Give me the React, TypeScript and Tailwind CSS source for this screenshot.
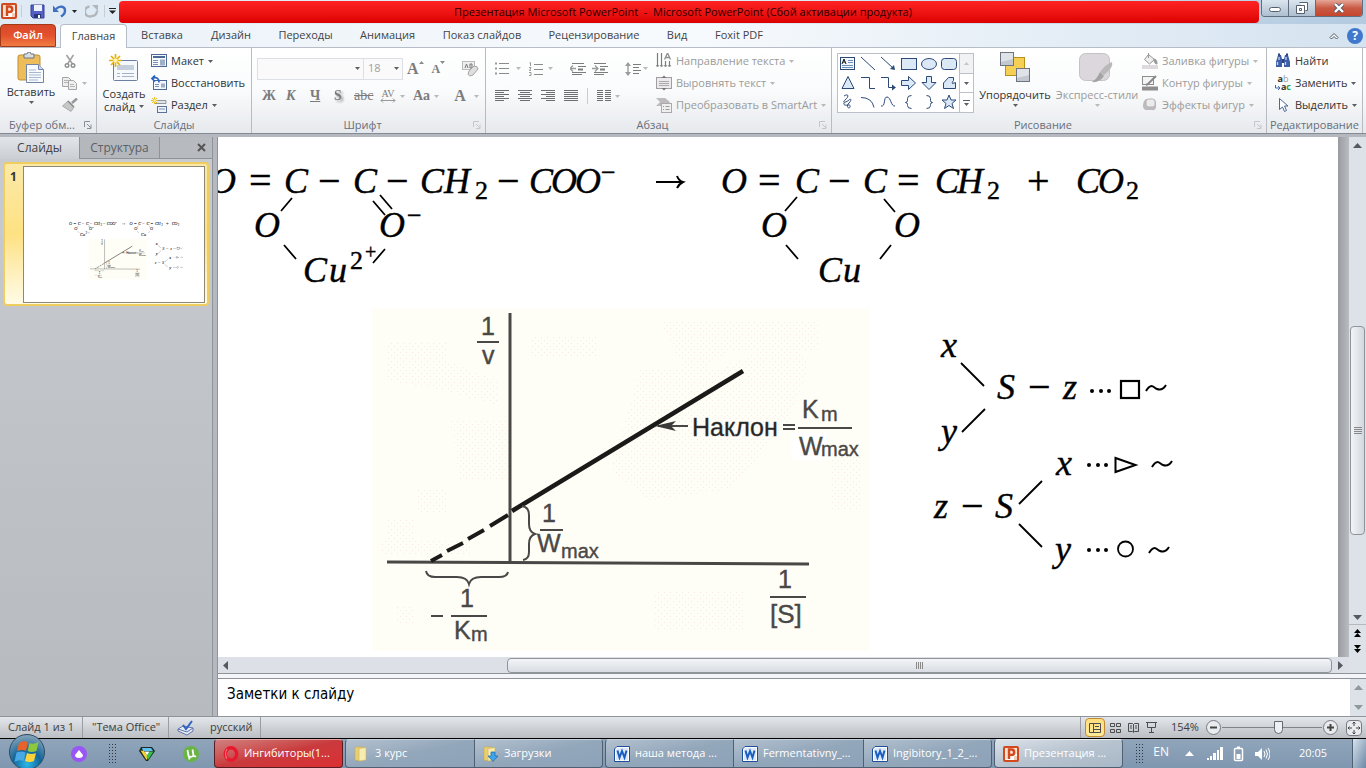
import React from 'react';

type IconProps = { w?: number; h?: number; className?: string; children: React.ReactNode };

const Icon = ({ w = 16, h = 16, className = '', children }: IconProps) => (
  <svg width={w} height={h} viewBox={`0 0 ${w} ${h}`} fill="none" className={`shrink-0 ${className}`} aria-hidden="true">
    {children}
  </svg>
);

const Caret = ({ color = '#5a5f66' }: { color?: string }) => (
  <Icon w={5} h={3}><path d="M0 0h5L2.5 3z" fill={color} /></Icon>
);

const Launcher = ({ muted = false }: { muted?: boolean }) => (
  <Icon w={8} h={8}>
    <path d="M.5 6V.5H6M3 3l4 4M7 3.500V7.500H3" stroke={muted ? '#c3c6ca' : '#8b9097'} />
  </Icon>
);

const VSep = ({ className = 'h-4' }: { className?: string }) => <span className={`w-px shrink-0 bg-[#c9ccd1] ${className}`} />;

/* ---------- icons ---------- */

const PptLogo = () => (
  <Icon>
    <rect x="1" y="1" width="14" height="14" rx="1" fill="#fff" stroke="#d2491d" strokeWidth="2" />
    <path d="M2 2h12v6L2 14z" fill="#fbe3d4" />
    <path d="M6 13V3.500h2.500a2.700 2.700 0 010 5.400H6" stroke="#d2491d" strokeWidth="2.400" />
    <path d="M11 11h3M11 13h3" stroke="#e69a74" />
  </Icon>
);

const WordLogo = () => (
  <Icon>
    <path d="M3 .5h12.500v15H.5V3z" fill="#fff" stroke="#1d4f9c" />
    <path d="M3.500 2h10.500v12H2V3.500z" fill="#dce9fb" />
    <path d="M3.500 4.500L5.500 11.500 8 5l2.500 6.500 2-7" stroke="#1a5fc0" strokeWidth="2" />
  </Icon>
);

const SaveIcon = () => (
  <Icon w={15} h={15}>
    <path d="M1 1h13v13H3l-2-2z" fill="#5562c4" stroke="#343f96" />
    <path d="M4 1h8v6H4z" fill="#eef3fb" />
    <path d="M4 10h7v4H4z" fill="#27357c" />
    <path d="M8 11h2v3H8z" fill="#fff" />
  </Icon>
);

const UndoIcon = () => (
  <Icon w={14} h={14}>
    <path d="M0 1.500v6.500h6z" fill="#3f6fc0" />
    <path d="M3 5C7 1 12 2.500 12 6.500c0 2.500-1.500 4.500-4 6" stroke="#3f6fc0" strokeWidth="2.400" />
  </Icon>
);

const RedoIcon = () => (
  <Icon w={14} h={14}>
    <path d="M4.500 2.500A5 5 0 107 12a5 5 0 005-5.500" stroke="#b3b7bc" strokeWidth="2.400" />
    <path d="M7 1h6v6z" fill="#b3b7bc" />
  </Icon>
);

const PasteIcon = () => (
  <Icon w={28} h={32}>
    <rect x="1" y="3" width="22" height="25" rx="2" fill="#edbd5c" stroke="#c18d35" />
    <path d="M7 2h3a2 2 0 014 0h3v4H7z" fill="#d9dde2" stroke="#6f7680" />
    <path d="M9.500 12.500h12l5 5v13h-17z" fill="#f7faff" stroke="#7285a5" />
    <path d="M21.500 12.500v5h5" fill="#ccd8e9" stroke="#7285a5" />
    <path d="M12 18h7M12 20.500h12M12 23h12M12 25.500h12M12 28h9" stroke="#a8b7ce" />
  </Icon>
);

const CutIcon = () => (
  <Icon w={12} h={15}>
    <path d="M2.500 1l6 9M9.500 1l-6 9" stroke="#a3a3a3" strokeWidth="1.600" />
    <circle cx="3" cy="11.500" r="1.800" stroke="#8f8f8f" strokeWidth="1.400" />
    <circle cx="9" cy="11.500" r="1.800" stroke="#8f8f8f" strokeWidth="1.400" />
  </Icon>
);

const CopyIcon = () => (
  <Icon w={16} h={14}>
    <path d="M.5 1.500h6l3 3v6h-9z" fill="#eee" stroke="#a5a5a5" />
    <path d="M6.500 4.500h5l3 3v6h-8z" fill="#f0f0f0" stroke="#a5a5a5" />
    <path d="M2 4.500h4M2 6.500h4M8 8.500h4M8 10.500h5" stroke="#b5b5b5" />
  </Icon>
);

const BrushIcon = () => (
  <Icon w={16} h={14}>
    <path d="M15 .5l-5 4.500" stroke="#999" strokeWidth="2.500" />
    <path d="M6 3l6 6-3 4.500L.5 8z" fill="#c6c6c6" stroke="#aaa" />
    <path d="M6 3l6 6" stroke="#888" strokeWidth="1.500" />
  </Icon>
);

const Spark = ({ s = 1 }: { s?: number }) => (
  <g transform={`scale(${s})`}>
    <path d="M6.500 0v13M0 6.500h13M2 2l9 9M11 2l-9 9" stroke="#e9b200" strokeWidth="1.700" />
    <circle cx="6.500" cy="6.500" r="2.200" fill="#fff6a8" />
  </g>
);

const NewSlideIcon = () => (
  <Icon w={30} h={29}>
    <rect x="4.500" y="6.500" width="24" height="20" rx="1" fill="#f5f8fc" stroke="#6a7fa2" />
    <rect x="8" y="11" width="17" height="5" fill="#c5cedb" />
    <path d="M8 19.500h3M13 19.500h12M8 22.500h3M13 22.500h12" stroke="#a5b3c8" />
    <Spark />
  </Icon>
);

const LayoutIcon = () => (
  <Icon w={16} h={14}>
    <rect x=".5" y=".5" width="15" height="12" fill="#f7fafd" stroke="#4d6a96" />
    <path d="M2 3h12" stroke="#4d6a96" strokeWidth="2" />
    <path d="M2 6.500h5M2 8.500h5M2 10.500h5" stroke="#7c93b5" />
    <path d="M9 5.500h5v6H9z" fill="#9fb0c8" />
  </Icon>
);

const ResetIcon = () => (
  <Icon w={16} h={16}>
    <rect x="2.500" y="5.500" width="13" height="9" fill="#f4f8fd" stroke="#4d6a96" />
    <path d="M4 9.500h4M4 11.500h4" stroke="#7c93b5" />
    <path d="M10 8.500h4v4h-4z" fill="#9fb0c8" />
    <path d="M1 3.500c4-2 7-.5 7 4M4 .5l-3 3 3 3" stroke="#2a62be" strokeWidth="1.700" />
  </Icon>
);

const SectionIcon = () => (
  <Icon w={16} h={16}>
    <path d="M7 3.500h8v3H4" fill="#e1e3e7" stroke="#92979f" />
    <rect x="6.500" y="9.500" width="9" height="6" fill="#eef3fa" stroke="#5c7297" />
    <path d="M8 12h6" stroke="#7c93b5" />
    <Spark s={0.55} />
  </Icon>
);

const EraserIcon = () => (
  <Icon w={17} h={16}>
    <rect x=".5" y=".5" width="12" height="8" fill="#eee" stroke="#bbb" />
    <path d="M3 7l1.500-4L6 7M8 3v4h2V3z" stroke="#777" />
    <path d="M7 10l5-5q4 0 4 3l-5 6q-4 2-5-1z" fill="#e0dede" stroke="#a5a3a3" />
  </Icon>
);

const Bullets = () => (
  <Icon w={14} h={13}>
    <path d="M4 1.500h10M4 6.500h10M4 11.500h10" stroke="#8b8b8b" />
    <path d="M0 1.500h2M0 6.500h2M0 11.500h2" stroke="#9a9a9a" strokeWidth="2" />
  </Icon>
);

const Numbering = () => (
  <Icon w={14} h={14}>
    <path d="M5 2.500h9M5 7.500h9M5 12.500h9" stroke="#8b8b8b" />
    <path d="M.5 1l1-.5V4M0 5.500h2L.5 8.500H2M0 10.500h2v3H0" stroke="#9a9a9a" />
  </Icon>
);

const Indent = ({ left = false }: { left?: boolean }) => (
  <Icon w={16} h={14}>
    <path d="M2 1.500h12M8 4.500h8M2 10.500h14M2 12.500h10" stroke="#7c7c7c" />
    <path d="M8 7.500h5" stroke="#7c7c7c" strokeWidth="2" />
    <path d={left ? 'M0 6.500h6M3 3.500l-3 3 3 3' : 'M0 6.500h6M3 3.500l3 3-3 3'} stroke="#9b9b9b" strokeWidth="1.300" />
  </Icon>
);

const LineSpacing = () => (
  <Icon w={16} h={16}>
    <path d="M3 2v12" stroke="#9b9b9b" strokeWidth="1.400" />
    <path d="M0 5l3-4 3 4zM0 11l3 4 3-4z" fill="#9b9b9b" />
    <path d="M8 3.500h8M8 6.500h6M8 9.500h8M8 12.500h6" stroke="#7c7c7c" />
  </Icon>
);

const Align = ({ d }: { d: string }) => (
  <Icon w={14} h={12}><path d={d} stroke="#6f6f6f" /></Icon>
);

const TextDirIcon = () => (
  <Icon w={16} h={16}>
    <path d="M1.500 0v14M5.500 0v14M9.500 8v6M13.500 8v6" stroke="#7c7c7c" strokeWidth="1.200" />
    <path d="M8.500 6.500L11.500 0l3 6.500M9.500 4.500h4" stroke="#909090" strokeWidth="1.300" />
    <path d="M0 12l1.500 2L3 12M4 12l1.500 2L7 12M8 12l1.500 2 1.500-2M12 12l1.500 2 1.500-2" stroke="#9b9b9b" />
  </Icon>
);

const AlignTextIcon = () => (
  <Icon w={16} h={16}>
    <rect x=".5" y="2.500" width="15" height="11" fill="#eceaec" stroke="#a09ea0" />
    <path d="M3 6.500h10M3 8.500h10M3 10.500h10" stroke="#a9a7a9" />
    <path d="M5.500 3L8 .5 10.500 3zM5.500 13L8 15.500l2.500-2.500z" fill="#777" />
  </Icon>
);

const SmartArtIcon = () => (
  <Icon w={16} h={16}>
    <path d="M0 1h9l5 4-3 4H0l4-4z" fill="#bdbbbd" />
    <rect x="5.500" y="6.500" width="10" height="9" fill="#f0eff0" stroke="#aaa" />
    <path d="M7 9.500h1M7 12.500h1M9.500 9.500h4M9.500 12.500h4" stroke="#999" />
  </Icon>
);

const ArrangeIcon = () => (
  <Icon w={31} h={31}>
    <rect x="5.500" y="5.500" width="19" height="18" fill="#f6cf55" stroke="#b98f1c" />
    <rect x=".5" y=".5" width="13" height="13" fill="#c3c8d0" stroke="#6e7580" />
    <path d="M1 1h12v6L1 10z" fill="#dfe2e7" />
    <rect x="16.500" y="16.500" width="13" height="13" fill="#c3c8d0" stroke="#6e7580" />
    <path d="M17 17h12v6l-12 3z" fill="#dfe2e7" />
  </Icon>
);

const QuickStyleIcon = () => (
  <Icon w={38} h={32}>
    <rect x="1.500" y="1.500" width="30" height="27" rx="6" fill="#dcd7dc" stroke="#c5c2c5" />
    <path d="M34 10q2 5-8 13l-4-3q6-8 12-10z" fill="#b9b9b9" />
    <path d="M22 20l4 4q-5 7-12 6 5-3 8-10z" fill="#a3a3a3" />
  </Icon>
);

const FillIcon = () => (
  <Icon w={16} h={16}>
    <path d="M6.500 1.500l6 5-5 4.500-5-4.500z" fill="#eee" stroke="#969696" />
    <path d="M6.500 0v5M12 6q3 0 3 5-3 0-3-5z" fill="#999" stroke="#999" />
    <path d="M0 14h16" stroke="#ddd9dd" strokeWidth="4" />
  </Icon>
);

const OutlineIcon = () => (
  <Icon w={16} h={16}>
    <rect x=".5" y="1.500" width="11" height="8" fill="#f4f4f4" stroke="#8d8d8d" />
    <path d="M14 1L6 9l-2 1" stroke="#888" strokeWidth="2" />
    <path d="M0 13.500h16" stroke="#8f8d8f" strokeWidth="4" />
  </Icon>
);

const EffectsIcon = () => (
  <Icon w={16} h={16}>
    <path d="M4 2h7q3 1 3 4v5q-2 3-4 2H4q-3-1-3-4 0-5 3-7z" fill="#bdbbbd" />
    <rect x="4" y="2" width="9" height="8" rx="2.500" fill="#ecebec" stroke="#b5b3b5" />
  </Icon>
);

const FindIcon = () => (
  <Icon w={16} h={16}>
    <path d="M3 2h3l1 4v8H1V9zM10 2h3l2 7v5H9V6z" fill="#3c5ea8" />
    <path d="M7 6h2v4H7zM3 .5h2v2H3zM11 .5h2v2h-2z" fill="#27427f" />
    <path d="M2.500 9v3M10.500 9v3M4 4v3M11 4v3" stroke="#c6d5f2" strokeWidth="1.300" />
  </Icon>
);

const ReplaceIcon = () => (
  <span className="relative flex h-4 w-4 flex-col text-[9px] leading-[8px]">
    <span className="font-bold">a<span className="font-normal text-[#999]">b</span></span>
    <span className="self-end font-bold">a<span className="text-[#2d9a3a]">c</span></span>
    <svg width="6" height="6" viewBox="0 0 6 6" fill="none" className="absolute bottom-0 left-0" aria-hidden="true">
      <path d="M.5 0v3H5M3 1l2 2-2 2" stroke="#3b66b5" />
    </svg>
  </span>
);

const SelectIcon = () => (
  <Icon w={12} h={16}>
    <path d="M2.500 1.500v11l3-2.500 2 4.500 2-1-2-4.500h3.500z" fill="#fff" stroke="#4b6796" />
  </Icon>
);

const navy = '#2c4a78';
const sky = '#dbe9f7';
const shapes: React.ReactNode[] = [
  <><rect x="1.500" y="2.500" width="14" height="12" fill="#f3f8fd" stroke={navy} /><path d="M3 9l2-5 2 5M4 7h2" stroke="#111" /><path d="M9 5.500h5M9 7.500h5M3 10.500h11M3 12.500h11" stroke="#6d8fc0" /></>,
  <path d="M2 2l14 13" stroke={navy} />,
  <><path d="M2 2l12 11" stroke={navy} /><path d="M16 15l-5-1 4-4z" fill={navy} /></>,
  <rect x="1.500" y="3.500" width="15" height="11" fill={sky} stroke={navy} />,
  <ellipse cx="9" cy="9" rx="7.500" ry="5.500" fill={sky} stroke={navy} />,
  <rect x="1.500" y="3.500" width="15" height="11" rx="3" fill={sky} stroke={navy} />,
  <path d="M9 2.500l6 12H3z" fill={sky} stroke={navy} />,
  <path d="M2 3.500h8.500v11H16" stroke={navy} />,
  <><path d="M2 3.500h7.500v10H14" stroke={navy} /><path d="M17 13.500l-4-3v6z" fill={navy} /></>,
  <path d="M1.500 6.500h7v-4l7 6.500-7 6.500v-4h-7z" fill={sky} stroke={navy} />,
  <path d="M6.500 2.500h5v6h4.500l-7 7-7-7h4.500z" fill={sky} stroke={navy} />,
  <path d="M3.500 14.500V9l5-5.500h5v3q-2 2-1 3l3-1v6z" fill={sky} stroke={navy} />,
  <path d="M5 3c5-3 5 1 1 4-4 4 2 2 4 0s3 0 0 3-1 5 0 5 2-3 0-3-6 1-5-2" stroke={navy} />,
  <path d="M2 4.500q11 0 13 10" stroke={navy} />,
  <path d="M2 13C7 14 4 4 8 4s4 10 8 9" stroke={navy} />,
  <path d="M11.500 2.500q-4 0-4 3v2q0 2-2 2 2 0 2 2v1q0 3 4 3" stroke={navy} />,
  <path d="M6.500 2.500q4 0 4 3v2q0 2 2 2-2 0-2 2v1q0 3-4 3" stroke={navy} />,
  <path d="M9 2l2 5h5l-4 3.500 1.500 5L9 12.500l-4.500 3 1.500-5L2 7h5z" fill={sky} stroke={navy} />,
];

/* ---------- ribbon building blocks ---------- */

type GroupProps = { title: string; className: string; launcher?: 'on' | 'off'; children: React.ReactNode };

const Group = ({ title, className, launcher, children }: GroupProps) => (
  <section className={`flex h-full shrink-0 flex-col border-r border-[#b8bcc2] ${className}`}>
    <div className="flex min-h-0 flex-1 pt-[2px]">{children}</div>
    <div className="flex h-4 items-center text-[11px] text-[#686e7b]">
      <h2 className="flex-1 whitespace-nowrap text-center">{title}</h2>
      {launcher && <button aria-label={title} className="pr-1"><Launcher muted={launcher === 'off'} /></button>}
    </div>
  </section>
);

type CmdProps = { icon: React.ReactNode; label: string; caret?: boolean; disabled?: boolean };

const Cmd = ({ icon, label, caret = true, disabled = false }: CmdProps) => (
  <button disabled={disabled} className="flex h-[22px] items-center gap-1 whitespace-nowrap text-[#333] disabled:text-[#9b9b9b]">
    <span className="flex w-4 justify-center">{icon}</span>
    <span>{label}</span>
    {caret && <Caret color={disabled ? '#b9b9b9' : '#5a5f66'} />}
  </button>
);

const Glyph = ({ children, className = '' }: { children: React.ReactNode; className?: string }) => (
  <button disabled className={`flex items-center gap-1 font-['Liberation_Serif',serif] text-sm text-[#7c7c7c] ${className}`}>{children}</button>
);

const tabs = [
  ['Главная', 'w-[67px]'],
  ['Вставка', 'w-[70px]'],
  ['Дизайн', 'w-[68px]'],
  ['Переходы', 'w-[81px]'],
  ['Анимация', 'w-[83px]'],
  ['Показ слайдов', 'w-[106px]'],
  ['Рецензирование', 'w-[118px]'],
  ['Вид', 'w-[48px]'],
  ['Foxit PDF', 'w-[76px]'],
];

const TitleBar = () => (
  <header className="flex h-6 shrink-0 items-start bg-gradient-to-r from-[#dfeaf4] via-[#e6eff7] to-[#b3cadf]">
    <div className="flex h-[22px] w-[119px] shrink-0 items-center pl-px">
      <PptLogo />
      <VSep className="ml-1 h-3" />
      <button aria-label="Сохранить" className="ml-2"><SaveIcon /></button>
      <button aria-label="Отменить" className="ml-2 flex items-center gap-[5px]"><UndoIcon /><Caret color="#222" /></button>
      <button aria-label="Повторить" className="ml-2"><RedoIcon /></button>
      <VSep className="ml-[5px] h-3" />
      <button aria-label="Настройка панели" className="ml-1">
        <Icon w={7} h={6}><path d="M0 .5h7" stroke="#222" /><path d="M0 2.500h7L3.500 6z" fill="#222" /></Icon>
      </button>
    </div>
    <h1 className="mt-px flex h-[22px] min-w-0 flex-1 items-center justify-center truncate whitespace-pre rounded-sm bg-gradient-to-b from-[#ff2222] to-[#dd0000] pr-3 text-[11px] text-[#2b0000]">
      Презентация Microsoft PowerPoint  -  Microsoft PowerPoint (Сбой активации продукта)
    </h1>
    <div className="ml-[2px] mr-[3px] flex h-[17px] w-[102px] shrink-0 overflow-hidden rounded-b border border-t-0 border-[#5f6f80]">
      <button aria-label="Свернуть" className="flex flex-1 items-end justify-center bg-gradient-to-b from-[#dbe5ee] to-[#aebfd0] pb-1">
        <span className="h-[5px] w-3 rounded-sm border border-[#56606c] bg-white" />
      </button>
      <button aria-label="Развернуть" className="flex flex-1 items-center justify-center border-l border-[#5f6f80] bg-gradient-to-b from-[#dbe5ee] to-[#aebfd0]">
        <Icon w={12} h={12}><path d="M3.500.5h8v8h-2M.5 3.500h8v8h-8zM3.500 6.500h2v2h-2z" stroke="#56606c" fill="#fff" /></Icon>
      </button>
      <button aria-label="Закрыть" className="flex w-[47px] items-center justify-center border-l border-[#5f6f80] bg-gradient-to-b from-[#e5a698] via-[#c95a45] to-[#c4452c]">
        <Icon w={12} h={10}><path d="M2 1l8 8M10 1L2 9" stroke="#525a6b" strokeWidth="4" /><path d="M2 1l8 8M10 1L2 9" stroke="#fff" strokeWidth="2.400" /></Icon>
      </button>
    </div>
  </header>
);

const TabRow = () => (
  <nav className="flex h-6 shrink-0 items-end border-b border-[#b6bdc6] bg-gradient-to-r from-[#eaf1f8] via-[#f7fafd] to-[#d5e3f0] text-[11px] text-[#444]">
    <button className="h-[23px] w-14 rounded-t border border-[#a33a17] bg-gradient-to-b from-[#d9482a] via-[#e2502d] to-[#f07c42] font-semibold text-white">Файл</button>
    <div className="ml-1 flex h-full flex-1">
      {tabs.map(([name, width], i) => (
        <button key={name} className={`${width} ${i === 0 ? '-mb-px h-6 rounded-t border border-b-0 border-[#b6bdc6] bg-white' : ''}`}>{name}</button>
      ))}
    </div>
    <div className="mr-[3px] flex h-full items-center gap-2">
      <button aria-label="Свернуть ленту"><Icon w={10} h={8}><path d="M1 5.500L5 1.500l4 4-1.500 1.500L5 4.500 2.500 7z" fill="#fff" stroke="#4c5563" /></Icon></button>
      <button aria-label="Справка" className="h-4 w-4 rounded-full bg-[#3f78cc] text-xs font-bold leading-4 text-white">?</button>
    </div>
  </nav>
);

const Ribbon = () => (
  <div className="flex h-[86px] shrink-0 overflow-hidden border-b border-[#858b94] bg-gradient-to-b from-white via-[#fafbfc] to-[#e6e9ed] text-[11px]">
    <Group title="Буфер обм..." className="w-[97px]" launcher="on">
      <button className="flex w-[62px] flex-col items-center pt-[2px] text-[#333]">
        <PasteIcon />
        <span>Вставить</span>
        <Caret />
      </button>
      <div className="flex flex-col">
        <button disabled aria-label="Вырезать" className="flex h-[22px] items-center pl-[2px]"><CutIcon /></button>
        <button disabled aria-label="Копировать" className="flex h-[22px] items-center gap-1"><CopyIcon /><Caret color="#b9b9b9" /></button>
        <button disabled aria-label="Формат по образцу" className="flex h-[22px] items-center"><BrushIcon /></button>
      </div>
    </Group>

    <Group title="Слайды" className="w-[155px]">
      <button className="flex w-[54px] flex-col items-center pt-1 leading-[13px] text-[#333]">
        <NewSlideIcon />
        <span className="mt-1">Создать</span>
        <span className="flex items-center gap-1">слайд <Caret /></span>
      </button>
      <div className="flex flex-col">
        <Cmd icon={<LayoutIcon />} label="Макет" />
        <Cmd icon={<ResetIcon />} label="Восстановить" caret={false} />
        <Cmd icon={<SectionIcon />} label="Раздел" />
      </div>
    </Group>

    <Group title="Шрифт" className="w-[234px]" launcher="off">
      <div className="flex flex-1 flex-col pl-[5px]">
        <div className="flex h-[33px] items-center pt-1">
          <label className="relative flex">
            <select disabled aria-label="Шрифт" className="h-[22px] w-[107px] appearance-none border border-[#dcdfe4] bg-[#fafafa] opacity-100" />
            <span className="absolute right-1 top-[9px]"><Caret /></span>
          </label>
          <label className="relative -ml-px flex">
            <select disabled aria-label="Размер шрифта" className="h-[22px] w-10 appearance-none border border-[#dcdfe4] bg-[#fafafa] pl-1 text-[11px] text-[#a0a0a0] opacity-100">
              <option>18</option>
            </select>
            <span className="absolute right-1 top-[9px]"><Caret /></span>
          </label>
          <Glyph className="ml-1 font-bold"><span className="flex items-start text-base leading-4">A<Icon w={5} h={3}><path d="M0 3h5L2.500 0z" fill="#8b8b8b" /></Icon></span></Glyph>
          <Glyph className="ml-2 font-bold"><span className="flex items-start text-xs leading-4">A<Caret color="#8b8b8b" /></span></Glyph>
          <VSep className="mx-2" />
          <button disabled aria-label="Очистить формат"><EraserIcon /></button>
        </div>
        <div className="flex h-[26px] items-center pl-[5px]">
          <Glyph className="w-6 font-bold">Ж</Glyph>
          <Glyph className="w-6 font-bold italic">К</Glyph>
          <Glyph className="w-6 font-bold underline">Ч</Glyph>
          <Glyph className="w-5 font-bold"><span className="drop-shadow-[2px_2px_1px_#999]">S</span></Glyph>
          <Glyph className="w-[26px] line-through">abc</Glyph>
          <Glyph>
            <span className="flex flex-col items-center text-[10px] leading-[9px]">AV<Icon w={16} h={5}><path d="M1 2.500h14M3 .5l-2 2 2 2M13 .5l2 2-2 2" stroke="#999" /></Icon></span>
            <Caret color="#b9b9b9" />
          </Glyph>
          <Glyph className="ml-2 font-bold">Aa<Caret color="#b9b9b9" /></Glyph>
          <VSep className="ml-1 mr-[10px]" />
          <Glyph className="gap-2 font-bold"><span className="text-base leading-4">A</span><Caret color="#b9b9b9" /></Glyph>
        </div>
      </div>
    </Group>

    <Group title="Абзац" className="w-[346px]" launcher="off">
      <div className="flex w-[170px] flex-col pl-[9px]">
        <div className="flex h-[33px] items-center pt-1">
          <button disabled aria-label="Маркеры" className="flex items-center gap-[7px]"><Bullets /><Caret color="#b9b9b9" /></button>
          <button disabled aria-label="Нумерация" className="ml-2 flex items-center gap-[5px]"><Numbering /><Caret color="#b9b9b9" /></button>
          <VSep className="mx-2" />
          <button disabled aria-label="Уменьшить отступ"><Indent left /></button>
          <button disabled aria-label="Увеличить отступ" className="ml-[6px]"><Indent /></button>
          <VSep className="mx-2" />
          <button disabled aria-label="Интервал" className="flex items-center gap-[2px]"><LineSpacing /><Caret color="#b9b9b9" /></button>
        </div>
        <div className="flex h-[26px] items-center gap-[9px]">
          <button disabled aria-label="По левому краю"><Align d="M0 .5h14M0 2.500h9M0 4.500h14M0 6.500h9M0 8.500h14M0 10.500h9" /></button>
          <button disabled aria-label="По центру"><Align d="M0 .5h14M2 2.500h10M0 4.500h14M2 6.500h10M0 8.500h14M2 10.500h10" /></button>
          <button disabled aria-label="По правому краю"><Align d="M0 .5h14M5 2.500h9M0 4.500h14M5 6.500h9M0 8.500h14M5 10.500h9" /></button>
          <button disabled aria-label="По ширине"><Align d="M0 .5h14M0 2.500h14M0 4.500h14M0 6.500h14M0 8.500h14M0 10.500h14" /></button>
          <VSep />
          <button disabled aria-label="Колонки" className="flex items-center gap-1">
            <Align d="M0 .5h6M0 2.500h6M0 4.500h6M0 6.500h6M0 8.500h6M0 10.500h6M8 .5h6M8 2.500h6M8 4.500h6M8 6.500h6M8 8.500h6M8 10.500h6" />
            <Caret color="#b9b9b9" />
          </button>
        </div>
      </div>
      <div className="flex flex-col">
        <Cmd disabled icon={<TextDirIcon />} label="Направление текста" />
        <Cmd disabled icon={<AlignTextIcon />} label="Выровнять текст" />
        <Cmd disabled icon={<SmartArtIcon />} label="Преобразовать в SmartArt" />
      </div>
    </Group>

    <Group title="Рисование" className="w-[435px]" launcher="off">
      <div className="ml-[5px] mt-[3px] flex h-[60px] w-[137px] border border-[#bcc1c9] bg-white">
        <div className="grid flex-1 grid-cols-6 grid-rows-3">
          {shapes.map((shape, i) => (
            <button key={i} aria-label={`Фигура ${i + 1}`} className="flex items-center justify-center"><Icon w={18} h={18}>{shape}</Icon></button>
          ))}
        </div>
        <div className="flex w-[14px] flex-col divide-y divide-[#bcc1c9] border-l border-[#bcc1c9]">
          <button aria-label="Вверх" className="flex flex-1 items-center justify-center bg-[#f1f2f4]"><Icon w={5} h={3}><path d="M0 3h5L2.500 0z" fill="#c3c6ca" /></Icon></button>
          <button aria-label="Вниз" className="flex flex-1 items-center justify-center"><Caret /></button>
          <button aria-label="Ещё" className="flex flex-1 items-center justify-center"><Icon w={7} h={6}><path d="M0 .5h7" stroke="#5a5f66" /><path d="M1 3h5L3.500 6z" fill="#5a5f66" /></Icon></button>
        </div>
      </div>
      <button className="ml-1 flex w-[74px] flex-col items-center pt-[2px] text-[#333]">
        <ArrangeIcon />
        <span className="mt-1">Упорядочить</span>
        <Caret />
      </button>
      <button disabled className="flex w-[90px] flex-col items-center pt-[2px] text-[#9b9b9b]">
        <QuickStyleIcon />
        <span className="mt-[3px] whitespace-nowrap">Экспресс-стили</span>
        <Caret color="#b9b9b9" />
      </button>
      <div className="flex flex-col">
        <Cmd disabled icon={<FillIcon />} label="Заливка фигуры" />
        <Cmd disabled icon={<OutlineIcon />} label="Контур фигуры" />
        <Cmd disabled icon={<EffectsIcon />} label="Эффекты фигур" />
      </div>
    </Group>

    <Group title="Редактирование" className="w-[96px]">
      <div className="flex flex-col pl-2">
        <Cmd icon={<FindIcon />} label="Найти" caret={false} />
        <Cmd icon={<ReplaceIcon />} label="Заменить" />
        <Cmd icon={<SelectIcon />} label="Выделить" />
      </div>
    </Group>
  </div>
);

/* ---------- slide content ---------- */

// x, baseline, text
type Label = [number, number, string];

const italics: Label[] = [
  [210, 193, 'O'], [284, 193, 'C'], [353, 193, 'C'], [420, 193, 'C'], [444, 193, 'H'],
  [529, 193, 'C'], [551, 193, 'O'], [575, 193, 'O'],
  [721, 193, 'O'], [795, 193, 'C'], [863, 193, 'C'], [935, 193, 'C'], [957, 193, 'H'],
  [1076, 193, 'C'], [1098, 193, 'O'],
  [254, 237, 'O'], [379, 237, 'O'], [761, 237, 'O'], [894, 237, 'O'],
  [303, 282, 'C'], [329, 282, 'u'], [818, 282, 'C'], [843, 282, 'u'],
  [941, 357, 'x'], [997, 399, 'S'], [1063, 399, 'z'], [941, 443, 'y'],
  [1056, 475, 'x'], [934, 518, 'z'], [995, 518, 'S'], [1055, 561, 'y'],
];

const smalls: Label[] = [
  [475, 199, '2'], [987, 199, '2'], [1126, 199, '2'], [350, 269, '2'],
];

const operators: Label[] = [
  [249, 194, '='], [318, 194, '−'], [386, 194, '−'], [497, 194, '−'],
  [758, 194, '='], [828, 194, '−'], [897, 194, '='], [1027, 194, '+'],
  [1028, 400, '−'], [961, 519, '−'],
];

const bonds =
  'M292 198l-11 13M380 195l12 14M373 201l12 14M284 245l12 14M385 249l-12 14' +
  'M797 197l-12 14M884 199l11 13M786 245l12 14M891 245l-11 14' +
  'M961 363l23 23M962 432l23 -23M1019 504l23 -23M1019 524l23 23';

const Tilde = ({ x, y }: { x: number; y: number }) => (
  <path d={`M${x} ${y + 3}c5-9 8-3 11-2s6 1 9-4`} strokeWidth="2" />
);

const Dots = ({ x, y }: { x: number; y: number }) => (
  <g fill="#000" stroke="none">
    <circle cx={x} cy={y} r="2" /><circle cx={x + 9} cy={y} r="2" /><circle cx={x + 17} cy={y} r="2" />
  </g>
);

const Chart = () => (
  <g>
    <defs>
      <pattern id="grain" width="6" height="6" patternUnits="userSpaceOnUse"><path d="M1 1h1v1H1zM4 4h1v1H4z" fill="#f8e9e2" /></pattern>
    </defs>
    <rect x="372" y="308" width="498" height="343" fill="#fffef6" />
    <g fill="url(#grain)">
      <path d="M387 341h60v20l50 20v25l-50-15-60-10zM418 488h30v24h-30zM387 518h28v30h-28zM640 370h80l60-30 30 20-20 60-60 70-80 10-40-30zM530 336h66v20h-66zM830 450h30v60h-30zM660 320h160v30h-90l-40 30zM395 605h20v20h-20zM655 590h90v40h-90zM380 540h90v16h-90zM450 420h60v60h-50z" />
    </g>
    <rect x="791" y="433" width="36" height="27" fill="#fff" />
    <g stroke="#4a4846" strokeWidth="3">
      <path d="M510 313v250" strokeWidth="3" />
      <path d="M387 562l422 2" />
      <path d="M512 511l231-140" stroke="#1b1a19" strokeWidth="4.500" />
      <path d="M431 561l11-6M447 551l16-8M468 539l16-9M490 526l18-11" stroke="#1b1a19" strokeWidth="4" />
      <path d="M477 342h22M540 530h23M770 597h36M451 616h36M431 616h12M798 428h54M783 425h12M783 429h12" strokeWidth="2" />
      <path d="M658 426h30" strokeWidth="2" />
      <path d="M655 426l21-5-5 5 5 5z" fill="#3c3a38" stroke="none" />
      <path d="M522 506q7 1 7 9v9q0 8 6 10-6 2-6 10v8q0 7-6 8M426 571q1 6 9 6h22q10 0 12 7 2-7 12-7h18q8 0 9-5" fill="none" strokeWidth="2" />
    </g>
    <g fontFamily="Liberation Sans" fill="#4a4846" stroke="#4a4846" strokeWidth=".4">
      <g fontSize="25">
        <text x="481" y="335">1</text>
        <text x="482" y="364">v</text>
        <text x="542" y="522">1</text>
        <text x="778" y="588">1</text>
        <text x="460" y="607">1</text>
        <text x="770" y="623" fontSize="26">[S]</text>
        <text x="802" y="418">K</text>
        <text x="454" y="639">K</text>
        <text x="799" y="455">W</text>
        <text x="537" y="552">W</text>
        <text x="692" y="436" fill="#222">Наклон</text>
      </g>
      <g fontSize="20">
        <text x="821" y="421">m</text>
        <text x="471" y="641">m</text>
        <text x="821" y="456">max</text>
        <text x="561" y="558">max</text>
      </g>
    </g>
  </g>
);

const SlideArt = () => (
  <>
    <Chart />
    <g fontFamily="Liberation Serif" fill="#000" stroke="#000" strokeWidth=".4">
      <g fontSize="36" fontStyle="italic">
        {italics.map(([x, y, t], i) => <text key={i} x={x} y={y}>{t}</text>)}
      </g>
      <g fontSize="26">
        {smalls.map(([x, y, t], i) => <text key={i} x={x} y={y}>{t}</text>)}
        <text x="601" y="181">−</text>
        <text x="407" y="224">−</text>
        <text x="365" y="259" fontSize="20">+</text>
      </g>
      <g fontSize="40">
        {operators.map(([x, y, t], i) => <text key={i} x={x} y={y}>{t}</text>)}
      </g>
    </g>
    <g fill="none" stroke="#000" strokeWidth="1.800">
      <path d={bonds} />
      <path d="M656 182h26M677 176q2 5 6 6-4 2-6 6" strokeWidth="2" />
      <rect x="1121" y="381" width="18" height="17" strokeWidth="2.200" />
      <path d="M1115.500 458v14l20-7z" strokeWidth="2" />
      <circle cx="1125.500" cy="549" r="7.500" strokeWidth="1.800" />
      <Tilde x={1146} y={388} />
      <Tilde x={1152} y={464} />
      <Tilde x={1149} y={550} />
      <Dots x={1092} y={391} />
      <Dots x={1089} y={465} />
      <Dots x={1089} y={550} />
    </g>
  </>
);

const SlidesPane = () => (
  <aside className="flex w-[213px] shrink-0 flex-col border-r border-[#8f949b] bg-gradient-to-b from-[#c8ccd1] to-[#b7babf]">
    <div className="flex h-[22px] shrink-0 text-[12px] text-[#444]">
      <button className="w-[79px] bg-gradient-to-b from-[#e2e5e9] to-[#cbcfd4]">Слайды</button>
      <button className="w-[81px] border border-t-0 border-[#8f949b] bg-[#b4b8bd] text-[#5c5f64]">Структура</button>
      <div className="flex flex-1 items-center justify-end border-b border-[#8f949b] bg-[#b7bbc0] pr-[6px]">
        <button aria-label="Закрыть область"><Icon w={9} h={9}><path d="M1 1l7 7M8 1L1 8" stroke="#555" strokeWidth="2" /></Icon></button>
      </div>
    </div>
    <div className="mx-[3px] mt-[3px] flex rounded border-2 border-[#f0cd5f] bg-gradient-to-b from-[#fbe9a8] via-[#fee182] to-[#fffbe6] px-[2px] pb-px pt-[2px]">
      <span className="w-[14px] pl-[3px] pt-[3px] text-[12px] font-bold leading-4 text-[#333]">1</span>
      <svg viewBox="-167 -297 1513 1134" className="ml-[2px] aspect-[4/3] min-w-0 flex-1 border border-[#8d8874] bg-white" role="img" aria-label="Слайд 1"><SlideArt /></svg>
    </div>
  </aside>
);

const VArrow = ({ up = false, color = '#555a60' }: { up?: boolean; color?: string }) => (
  <Icon w={9} h={5}><path d={up ? 'M0 5h9L4.500 0z' : 'M0 0h9L4.500 5z'} fill={color} /></Icon>
);

const Workspace = () => (
  <div className="flex min-h-0 flex-1 border-t-[3px] border-[#b5b9bf]">
    <SlidesPane />
    <main className="ml-1 flex min-w-0 flex-1 flex-col border-l border-[#8f949b] bg-[#f3f5f8]">
      <div className="flex min-h-0 flex-1 border-b border-[#8f949b]">
        <div className="flex min-w-0 flex-1 flex-col">
          <div className="flex min-h-0 flex-1">
            <svg viewBox="218 137 1120 520" className="h-full min-w-0 flex-1 bg-white" role="img" aria-label="Слайд"><SlideArt /></svg>
            <div className="w-[11px] shrink-0 bg-gradient-to-r from-[#989ca1] to-[#b9bcc0]" />
          </div>
          <div className="flex h-4 shrink-0 items-center bg-[#dde1e7]">
            <button aria-label="Влево" className="pl-[5px]"><Icon w={5} h={9}><path d="M5 0v9L0 4.500z" fill="#555a60" /></Icon></button>
            <div className="ml-[279px] flex h-[15px] flex-1 items-center justify-center gap-px rounded-sm border border-[#8f949b] bg-gradient-to-b from-[#f2f4f7] to-[#d9dde3]">
              <span className="h-[7px] w-px bg-[#888]" /><span className="h-[7px] w-px bg-[#888]" /><span className="h-[7px] w-px bg-[#888]" /><span className="h-[7px] w-px bg-[#888]" />
            </div>
            <button aria-label="Вправо" className="flex w-[17px] justify-center"><Icon w={5} h={9}><path d="M0 0v9l5-4.500z" fill="#555a60" /></Icon></button>
          </div>
        </div>
        <div className="flex w-[17px] shrink-0 flex-col items-center bg-[#dde1e8]">
          <button aria-label="Вверх" className="flex h-4 items-center"><VArrow up /></button>
          <div className="w-full flex-[174]" />
          <div className="flex w-[15px] flex-[208] flex-col items-center justify-center gap-px rounded-sm border border-[#8f949b] bg-gradient-to-r from-[#f2f4f7] to-[#d3d8df]">
            <span className="h-px w-2 bg-[#888]" /><span className="h-px w-2 bg-[#888]" /><span className="h-px w-2 bg-[#888]" /><span className="h-px w-2 bg-[#888]" />
          </div>
          <div className="w-full flex-[76]" />
          <button aria-label="Вниз" className="flex h-[14px] w-full items-center justify-center border-b border-[#b5b9bf]"><VArrow /></button>
          <button aria-label="Предыдущий слайд" className="flex h-4 items-center"><Icon w={7} h={8}><path d="M0 4h7L3.500 0zM0 8h7L3.500 4z" fill="#000" /></Icon></button>
          <button aria-label="Следующий слайд" className="flex h-4 items-center"><Icon w={7} h={8}><path d="M0 0h7L3.500 4zM0 4h7L3.500 8z" fill="#000" /></Icon></button>
          <div className="h-4" />
        </div>
      </div>
      <div className="mt-1 flex h-[38px] shrink-0 border-t border-[#8f949b] bg-white">
        <textarea aria-label="Заметки" defaultValue="Заметки к слайду" className="min-w-0 flex-1 resize-none overflow-hidden pl-[9px] pt-[5px] font-['DejaVu_Sans_Condensed','DejaVu_Sans',sans-serif] text-[15px] leading-5 text-black outline-none" />
        <div className="flex w-4 flex-col items-center justify-between bg-[#dde1e8] py-[6px]"><VArrow up color="#8f9a9c" /><VArrow color="#8f9a9c" /></div>
      </div>
    </main>
  </div>
);

const StatusBar = () => (
  <footer className="flex h-[22px] shrink-0 items-center border-t border-[#8f949b] bg-gradient-to-b from-[#e3e6ea] to-[#bbbec3] text-[11px] text-[#3d3d3d]">
    <span className="w-[82px] pl-2">Слайд 1 из 1</span>
    <span className="h-full w-px bg-[#9a9ea4]" />
    <span className="w-[85px] pl-[9px]">"Тема Office"</span>
    <span className="h-full w-px bg-[#9a9ea4]" />
    <button aria-label="Орфография" className="ml-2">
      <Icon w={18} h={16}>
        <path d="M1 9l5-3 10 2v3l-6 4-9-4z" fill="#e9edf5" stroke="#5d72a8" />
        <path d="M1 9l9 3 6-4" stroke="#5d72a8" />
        <path d="M6 5l3 4 6-8" stroke="#2f62c4" strokeWidth="2" />
      </Icon>
    </button>
    <button className="ml-[15px] w-[50px] text-left">русский</button>
    <span className="h-full w-px bg-[#9a9ea4]" />
    <div className="flex-1" />
    <span className="h-full w-px bg-[#9a9ea4]" />
    <div className="flex items-center gap-[2px] pl-1">
      <button aria-label="Обычный" className="flex h-[19px] w-5 items-center justify-center rounded-sm border border-[#c28a30] bg-gradient-to-b from-[#ffdf7e] to-[#ffe99a]">
        <Icon w={12} h={10}><path d="M.5.5h11v9H.5zM4.500.5v9M4.500 6.500h7M6 3.500h4" stroke="#4d4d4d" /></Icon>
      </button>
      <button aria-label="Сортировщик" className="flex w-4 justify-center"><Icon w={11} h={10}><path d="M.5.5h4v3h-4zM6.500.5h4v3h-4zM.5 6.500h4v3h-4zM6.500 6.500h4v3h-4z" stroke="#4d4d4d" /></Icon></button>
      <button aria-label="Чтение" className="flex w-4 justify-center"><Icon w={11} h={11}><path d="M.5 1.500h4l1 1 1-1h4v8h-4l-1 1-1-1h-4zM5.500 2v8M2 4h2M2 6h2M7 4h2M7 6h2" stroke="#4d4d4d" /></Icon></button>
      <button aria-label="Показ" className="flex w-4 justify-center"><Icon w={11} h={11}><path d="M0 .5h11M1.500.5v5h8v-5M5.500 5.500v5M3 10.500h5" stroke="#4d4d4d" /></Icon></button>
    </div>
    <span className="ml-3 w-[34px] whitespace-nowrap">154%</span>
    <button aria-label="Уменьшить"><Icon w={17} h={17}><circle cx="8.500" cy="8.500" r="7" fill="#e9ebee" stroke="#777b82" /><path d="M5 8.500h7" stroke="#444" strokeWidth="2" /></Icon></button>
    <input
      type="range"
      aria-label="Масштаб"
      min={0}
      max={100}
      defaultValue={57}
      className="h-[14px] w-[100px] appearance-none bg-[linear-gradient(#7f848b,#7f848b)] bg-[length:100%_1px] bg-center bg-no-repeat [&::-webkit-slider-thumb]:h-[13px] [&::-webkit-slider-thumb]:w-[9px] [&::-webkit-slider-thumb]:appearance-none [&::-webkit-slider-thumb]:rounded-b-full [&::-webkit-slider-thumb]:border [&::-webkit-slider-thumb]:border-[#666a70] [&::-webkit-slider-thumb]:bg-[#eef0f3]"
    />
    <button aria-label="Увеличить"><Icon w={17} h={17}><circle cx="8.500" cy="8.500" r="7" fill="#e9ebee" stroke="#777b82" /><path d="M5 8.500h7M8.500 5v7" stroke="#444" strokeWidth="2" /></Icon></button>
    <button aria-label="Вписать" className="ml-[7px] mr-1 flex h-4 w-4 items-center justify-center rounded-sm border border-[#777b82] bg-[#e9ebee]">
      <Icon w={12} h={12}><path d="M6 0v4M6 8v4M0 6h4M8 6h4M4.500 1.500L6 0l1.500 1.500M4.500 10.500L6 12l1.500-1.500M1.500 4.500L0 6l1.500 1.500M10.500 4.500L12 6l-1.500 1.500" stroke="#444" /></Icon>
    </button>
  </footer>
);

/* ---------- taskbar ---------- */

const Grip = () => (
  <Icon w={8} h={20}>
    <path d="M.5 0v20M3.500 0v20M6.500 0v20" stroke="#2d3844" strokeDasharray="1 2" />
  </Icon>
);

const Folder = ({ download = false }: { download?: boolean }) => (
  <Icon>
    <path d="M1 1h8v13l-3 1-5-1z" fill="#e9cf74" stroke="#c9a94a" strokeWidth=".6" />
    <path d="M5 2.500l7-1V14l-7 1z" fill="#f8ebb0" stroke="#cfb35b" strokeWidth=".6" />
    {download && <path d="M8 6h4v4h3l-5 5.500L5 10h3z" fill="#3ea4ec" stroke="#1668ad" strokeWidth=".7" />}
  </Icon>
);

const OperaIcon = () => (
  <Icon><ellipse cx="8" cy="8" rx="5.700" ry="6.200" stroke="#e8182f" strokeWidth="3.500" /><path d="M4 13Q1 8 4 3" stroke="#ff6a76" strokeWidth="1.200" /></Icon>
);

const TaskButton = ({ icon, label, className }: { icon: React.ReactNode; label: string; className: string }) => (
  <button className={`flex h-[29px] items-center gap-[5px] overflow-hidden whitespace-nowrap border pl-2 text-[11px] text-white ${className}`}>
    {icon}
    <span>{label}</span>
  </button>
);

const glass = 'border-[#4e6072] border-t-[#c4d0dc] bg-gradient-to-br from-[#b3c1cf] via-[#93a7bb] to-[#8da2b8]';

const Taskbar = () => (
  <div className="relative flex h-[30px] shrink-0 items-center border-t border-black bg-gradient-to-b from-[#90a5ba] to-[#7f97b0]">
    <button aria-label="Пуск" className="absolute -top-[6px] left-2">
      <svg width="38" height="38" viewBox="0 0 38 38">
        <defs>
          <radialGradient id="orb" cx=".5" cy=".85" r=".8">
            <stop offset="0" stopColor="#29b8e8" /><stop offset=".5" stopColor="#13659a" /><stop offset="1" stopColor="#7e9fb5" />
          </radialGradient>
        </defs>
        <circle cx="19" cy="19" r="17.500" fill="url(#orb)" stroke="#2d4a63" />
        <path d="M11 10q4-3 9-1l-2 9q-4-2-9 0z" fill="#e8632b" />
        <path d="M21.500 10q4 2 9-1l-2 9q-5 2-9 0z" fill="#8dc63f" />
        <path d="M8.500 19.500q5-2 9 0l-2 8.500q-4-2-9 1z" fill="#4aa8e4" />
        <path d="M19 20q4 2 9 0l-2 8q-4 2-9 0z" fill="#fcd13a" />
      </svg>
    </button>
    <div className="flex w-[214px] shrink-0 items-center pl-[71px]">
      <button aria-label="Алиса"><Icon><circle cx="8" cy="8" r="8" fill="#9a55f5" /><path d="M8 4l4 5q0 3-4 3t-4-3z" fill="#fff" /></Icon></button>
      <span className="ml-[22px]"><Grip /></span>
      <button aria-label="Диск" className="ml-[22px]">
        <Icon><path d="M2 1h11l3 4-7 10H7L0 5z" fill="#1c2a22" /><path d="M3 2h9l2 3H4z" fill="#5cc1f2" /><path d="M1.500 4.500L7.500 14l1.500-3-4-6z" fill="#f6d02f" /><path d="M14.500 5.500L9 14 7.500 10.500l3-5z" fill="#36c24b" /><path d="M5.500 5.500h5L8 9.500z" fill="#fff" /></Icon>
      </button>
      <button aria-label="Торрент" className="ml-7">
        <Icon><circle cx="8" cy="8" r="8" fill="#69b544" /><path d="M4.500 4l1 6q3 2 5-.5L9.500 3.500M10.500 9.500q1 1.500 2.500.5M6 10.500l.5 3" stroke="#fff" strokeWidth="1.800" /></Icon>
      </button>
    </div>
    <div className="flex min-w-0 flex-1 text-white">
      <TaskButton icon={<OperaIcon />} label="Ингибиторы(1..." className="w-[129px] rounded-sm border-[#5a1d22] border-t-[#e9a5a5] bg-gradient-to-br from-[#cf7f80] via-[#c93a3d] to-[#dc2f33]" />
      <TaskButton icon={<Folder />} label="3 курс" className={`ml-[2px] w-[129px] rounded-l-sm border-r-0 ${glass}`} />
      <TaskButton icon={<Folder download />} label="Загрузки" className={`w-[129px] rounded-r-sm ${glass}`} />
      <TaskButton icon={<WordLogo />} label="наша метода ..." className={`ml-[2px] w-[128px] rounded-l-sm border-r-0 ${glass}`} />
      <TaskButton icon={<WordLogo />} label="Fermentativny_..." className={`w-[130px] border-r-0 ${glass}`} />
      <TaskButton icon={<WordLogo />} label="Ingibitory_1_2_..." className={`w-[129px] rounded-r-sm ${glass}`} />
      <TaskButton icon={<PptLogo />} label="Презентация ..." className="ml-[2px] w-[129px] rounded-sm border-[#4e6072] border-t-[#e8edf2] bg-gradient-to-br from-[#dbe2e9] via-[#b7c3cf] to-[#a9b8c7]" />
    </div>
    <div className="flex h-full shrink-0 items-center text-white">
      <Grip />
      <button className="ml-[9px] pb-1 text-[12px] leading-4">EN</button>
      <button aria-label="Скрытые значки" className="ml-4"><Icon w={9} h={5}><path d="M0 5h9L4.500 0z" fill="#fff" /></Icon></button>
      <button aria-label="Сеть" className="ml-[13px]"><Icon w={16} h={13}><path d="M0 11h2v2H0zM3 9h2v4H3zM6 6h3v7H6zM10 3h2v10h-2zM13 0h3v13h-3z" fill="#fff" /></Icon></button>
      <button aria-label="Батарея" className="ml-[10px]"><Icon w={11} h={16}><rect x="1.500" y="2.500" width="8" height="12" rx="1" stroke="#fff" strokeWidth="1.500" /><path d="M4 .5h3v2H4zM3.500 8h4v5h-4z" fill="#fff" /></Icon></button>
      <button aria-label="Громкость" className="ml-[10px]"><Icon w={16} h={14}><path d="M1 5h3l4-4v12L4 9H1z" fill="#fff" /><path d="M10 4q2 3 0 6M12 2.500q3 4.500 0 9M14 1q4 6 0 12" stroke="#fff" /></Icon></button>
      <time className="ml-[29px] w-8 whitespace-nowrap text-[11px]">20:05</time>
      <button aria-label="Показать рабочий стол" className="ml-[21px] h-full w-[14px] border-l border-[#4e6072] bg-gradient-to-br from-[#d8e2ec] to-[#6d89a5]" />
    </div>
  </div>
);

export default function App() {
  return (
    <div className="flex h-screen flex-col overflow-hidden bg-[#b5b9bf] font-['Open_Sans','Noto_Sans',sans-serif]">
      <TitleBar />
      <TabRow />
      <Ribbon />
      <Workspace />
      <StatusBar />
      <Taskbar />
    </div>
  );
}
